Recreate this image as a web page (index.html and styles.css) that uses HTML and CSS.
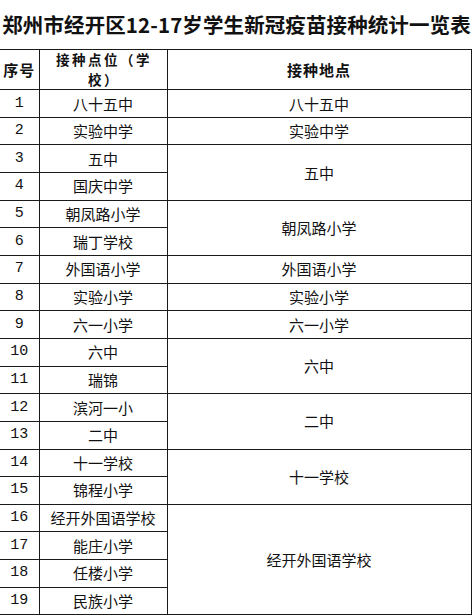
FILE: index.html
```html
<!DOCTYPE html>
<html lang="zh-CN">
<head>
<meta charset="utf-8">
<title>郑州市经开区12-17岁学生新冠疫苗接种统计一览表</title>
<link rel="stylesheet" href="styles.css">
</head>
<body>
<div class="page">
  <h1 class="title">郑州市经开区12-17岁学生新冠疫苗接种统计一览表</h1>
  <table class="sheet">
    <colgroup>
      <col class="c-no">
      <col class="c-site">
      <col class="c-place">
    </colgroup>
    <thead>
      <tr class="head-row">
        <th class="no">序号</th>
        <th class="wrap">接种点位（学<br>校）</th>
        <th>接种地点</th>
      </tr>
    </thead>
    <tbody>
      <tr><td class="no">1</td><td>八十五中</td><td>八十五中</td></tr>
      <tr><td class="no">2</td><td>实验中学</td><td>实验中学</td></tr>
      <tr><td class="no">3</td><td>五中</td><td rowspan="2">五中</td></tr>
      <tr><td class="no">4</td><td>国庆中学</td></tr>
      <tr><td class="no">5</td><td>朝凤路小学</td><td rowspan="2">朝凤路小学</td></tr>
      <tr><td class="no">6</td><td>瑞丁学校</td></tr>
      <tr><td class="no">7</td><td>外国语小学</td><td>外国语小学</td></tr>
      <tr><td class="no">8</td><td>实验小学</td><td>实验小学</td></tr>
      <tr><td class="no">9</td><td>六一小学</td><td>六一小学</td></tr>
      <tr><td class="no">10</td><td>六中</td><td rowspan="2">六中</td></tr>
      <tr><td class="no">11</td><td>瑞锦</td></tr>
      <tr><td class="no">12</td><td>滨河一小</td><td rowspan="2">二中</td></tr>
      <tr><td class="no">13</td><td>二中</td></tr>
      <tr><td class="no">14</td><td>十一学校</td><td rowspan="2">十一学校</td></tr>
      <tr><td class="no">15</td><td>锦程小学</td></tr>
      <tr><td class="no">16</td><td>经开外国语学校</td><td rowspan="4">经开外国语学校</td></tr>
      <tr><td class="no">17</td><td>能庄小学</td></tr>
      <tr><td class="no">18</td><td>任楼小学</td></tr>
      <tr><td class="no">19</td><td>民族小学</td></tr>
    </tbody>
  </table>
</div>
</body>
</html>
```

FILE: styles.css
```css
html, body {
  margin: 0;
  padding: 0;
  background: #ffffff;
}

.page {
  width: 473px;
  color: #111;
  font-family: "Noto Sans CJK SC", "Noto Sans", sans-serif;
}

.title {
  margin: 0;
  height: 49px;
  display: flex;
  align-items: center;
  justify-content: center;
  font-size: 20.5px;
  font-weight: 700;
  letter-spacing: 0.1px;
  white-space: nowrap;
  line-height: 1;
  padding-bottom: 1px;
  box-sizing: border-box;
}

.sheet {
  border-collapse: collapse;
  table-layout: fixed;
  width: 471px;
}

.c-no { width: 39px; }
.c-site { width: 128px; }
.c-place { width: 304px; }

.sheet th,
.sheet td {
  border: 1px solid #1a1a1a;
  padding: 0;
  text-align: center;
  vertical-align: middle;
  font-size: 15px;
  line-height: 18px;
  font-weight: 400;
}

.sheet th {
  font-weight: 700;
  font-size: 15px;
  letter-spacing: 1px;
}

.sheet th.wrap {
  font-size: 13.5px;
  line-height: 19.6px;
  letter-spacing: 2.5px;
  padding-left: 2px;
}

.sheet .no {
  border-left: none;
}

.sheet td.no {
  font-family: "Liberation Mono", "DejaVu Sans Mono", monospace;
  font-size: 15px;
}

.head-row {
  height: 40px;
}

.sheet tbody tr {
  height: 27.65px;
}
```
